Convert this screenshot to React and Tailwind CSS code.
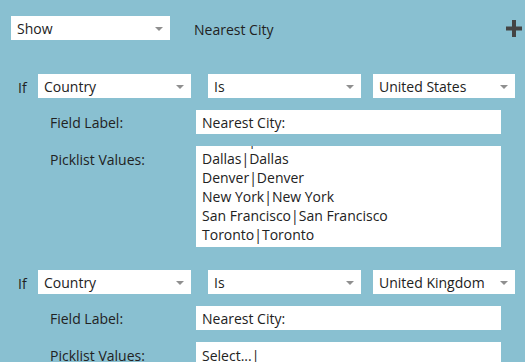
import React from 'react';

const font = { fontFamily: '"Open Sans", "Liberation Sans", sans-serif' };

const Arrow = () => (
  <svg width="8" height="4" viewBox="0 0 8 4" className="shrink-0">
    <path d="M0 0H8L4 4Z" fill="#8f8f8f" />
  </svg>
);

const Select = ({ value, width }) => (
  <div className={`flex items-center justify-between h-[24px] bg-white pl-[6px] pr-[7px] pt-[2px] ${width}`}>
    <span className="text-[14px] text-[#222] leading-none">{value}</span>
    <Arrow />
  </div>
);

const Condition = ({ country, lines, offset }) => (
  <div>
    <div className="flex items-center h-[24px]">
      <span className="w-[38px] pl-[18px] pt-[2px] text-[14px] text-[#222]">If</span>
      <Select value="Country" width="w-[153px]" />
      <div className="w-[17px]" />
      <Select value="Is" width="w-[153px]" />
      <div className="w-[12px]" />
      <Select value={country} width="w-[142px]" />
    </div>
    <div className="flex items-center mt-[12px] h-[24px]">
      <span className="w-[196px] pl-[50px] text-[14px] text-[#222]">Field Label:</span>
      <div className="w-[305px] h-[24px] bg-white flex items-center pl-[6px] text-[14px] text-[#222]">
        Nearest City:
      </div>
    </div>
    <div className="flex items-start mt-[12px]">
      <span className="w-[196px] pl-[50px] text-[14px] leading-[19px] pt-[4px] text-[#222]">Picklist Values:</span>
      <div className="w-[305px] h-[101px] bg-white overflow-hidden pl-[6px] text-[14px] leading-[19px] text-[#222]">
        <div className={offset}>
          {lines.map((l) => (
            <div key={l} className="whitespace-pre">{l}</div>
          ))}
        </div>
      </div>
    </div>
  </div>
);

export default function App() {
  return (
    <div className="w-[525px] h-[362px] bg-[#89c0d1] overflow-hidden" style={font}>
      <div className="flex items-center h-[24px] mt-[16px] pl-[11px] pr-[3px]">
        <Select value="Show" width="w-[159px]" />
        <span className="ml-[24px] pt-[2px] text-[14px] text-[#222]">Nearest City</span>
        <svg width="16" height="17" viewBox="0 0 16 17" className="ml-auto">
          <rect x="6" y="0" width="4" height="17" fill="#444" />
          <rect x="0" y="6.5" width="16" height="4" fill="#444" />
        </svg>
      </div>
      <div className="mt-[34px]">
        <Condition
          country="United States"
          offset="-mt-[16px]"
          lines={['Boston|Boston', 'Dallas|Dallas', 'Denver|Denver', 'New York|New York', 'San Francisco|San Francisco', 'Toronto|Toronto']}
        />
      </div>
      <div className="mt-[23px]">
        <Condition country="United Kingdom" offset="pt-[4px]" lines={['Select...|']} />
      </div>
    </div>
  );
}
